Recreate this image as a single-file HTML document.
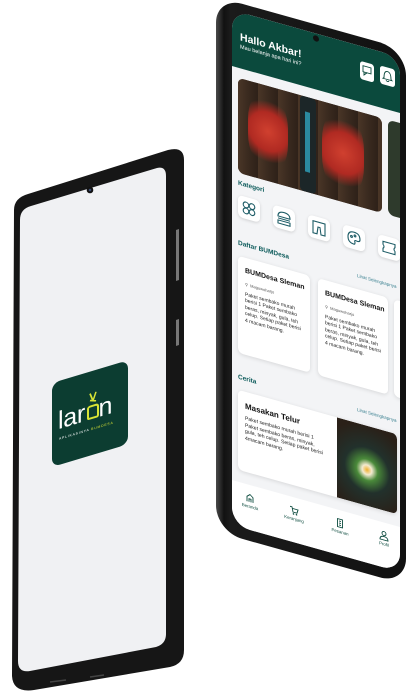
<!DOCTYPE html>
<html><head><meta charset="utf-8"><style>
*{margin:0;padding:0;box-sizing:border-box}
body{width:410px;height:700px;background:#fff;position:relative;overflow:hidden;font-family:"Liberation Sans",sans-serif}
.abs{position:absolute}
#rp{position:absolute;left:232px;top:10px;width:168px;height:515px;transform:skewY(15.64deg);transform-origin:0 0}
.frame{position:absolute;left:-16px;top:-9px;width:190px;height:535px;border-radius:26px;background:linear-gradient(90deg,#4a4a4a 0,#111 8px,#1b1b1b 14px,#111 100%)}
.screen{position:absolute;left:0;top:0;width:168px;height:515px;border-radius:18px;background:#f3f4f6;overflow:hidden}
.hdr{position:absolute;left:0;top:0;width:168px;height:56px;background:#0b4a3d}
.cat{position:absolute;top:183px;width:22px;height:22px;background:#fff;border-radius:5px;box-shadow:0 1px 3px rgba(0,0,0,.15)}
.cat svg{position:absolute;left:3px;top:3px}
.lbl{position:absolute;font-size:6.5px;font-weight:bold;color:#0b5a5a}
.lihat{position:absolute;font-size:4.5px;color:#3a8090}
.card{position:absolute;background:#fff;border-radius:5px;box-shadow:0 1px 4px rgba(0,0,0,.12)}
.card h4{position:absolute;left:7px;top:10px;font-size:7px;color:#111;white-space:nowrap}
.card .loc{position:absolute;left:7px;top:24px;font-size:4px;color:#555;white-space:nowrap}
.card p{position:absolute;left:7px;top:34px;width:57px;font-size:5px;line-height:6.4px;color:#222}
.nav{position:absolute;left:0;top:470px;width:168px;height:45px;background:#fff}
.ni{position:absolute;top:8px;text-align:center;font-size:4.3px;color:#0b4a3d;width:24px}
</style></head><body>

<svg class="abs" style="left:0;top:0" width="200" height="700">
<path d="M14,210 Q14,198 28,194 L168,150 Q184,146 184,160 L184,650 Q184,664 170,667 L34,690 Q13,693 12,676 Z" fill="#161616"/>
<path d="M176,230 L179,229 L179,280 L176,281Z" fill="#777"/>
<path d="M176,320 L179,319 L179,345 L176,346Z" fill="#777"/>
<path d="M20,220 Q20,209 31,206 L157,168 Q166,166 166,176 L166,634 Q166,644 156,647 L30,671 Q18,673 18,661 Z" fill="#f0f1f3"/>
<circle cx="90" cy="190" r="3.3" fill="#111"/><circle cx="90" cy="190" r="1.3" fill="#3a4a70"/>
<path d="M50,682 L66,680" stroke="#444" stroke-width="1.5"/><path d="M90,677 L104,675" stroke="#444" stroke-width="1.5"/>
</svg>

<div class="abs" style="left:52px;top:383px;width:76px;height:84px;transform:skewY(-16.7deg);transform-origin:0 0;background:#0c3d31;border-radius:8px">
 <div class="abs" style="left:6px;top:26px;font-size:25px;color:#fff;letter-spacing:-0.3px">lar<span style="color:#0c3d31">o</span>n</div>
 <div class="abs" style="left:35px;top:34px;width:12px;height:14px;border:2.2px solid #d8e435;border-radius:3px 3px 2px 2px"></div>
 <svg class="abs" style="left:35px;top:21px" width="12" height="13"><path d="M3,1 L6,9 M9,1 L6,9 M3,8 L9,10" stroke="#d8e435" stroke-width="1.6" fill="none"/></svg>
 <div class="abs" style="left:7px;top:56px;font-size:3.4px;color:#fff;letter-spacing:0.8px;white-space:nowrap">APLIKASINYA <span style="color:#d8e435">BUMDESA</span></div>
</div>

<div id="rp">
 <div class="frame"></div>
 <div class="screen">
  <div class="hdr">
   <div class="abs" style="left:8px;top:19px;font-size:10.5px;font-weight:bold;color:#fff">Hallo Akbar!</div>
   <div class="abs" style="left:8px;top:32px;font-size:5.5px;color:#fff">Mau belanja apa hari ini?</div>
   <div class="abs" style="left:128px;top:15px;width:14px;height:18px;background:#fff;border-radius:3px"><svg width="14" height="18"><rect x="3" y="4" width="8" height="6" fill="none" stroke="#0b4a3d" stroke-width=".9"/><path d="M4,10 L4,13 L7,10" fill="none" stroke="#0b4a3d" stroke-width=".9"/></svg></div>
   <div class="abs" style="left:148px;top:14px;width:15px;height:18px;background:#fff;border-radius:3px"><svg width="15" height="18"><path d="M4,11 Q4,4 7.5,4 Q11,4 11,11 L12,12 L3,12 Z M6,13 Q7.5,15 9,13" fill="none" stroke="#0b4a3d" stroke-width=".9"/></svg></div>
  </div>
  <div class="abs" style="left:81px;top:2px;width:6px;height:6px;border-radius:50%;background:#111"></div>
  <div class="abs" style="left:6px;top:66px;width:144px;height:95px;border-radius:6px;overflow:hidden;background:#3b2c22">
   <div class="abs" style="left:0;top:0;width:144px;height:95px;background:repeating-linear-gradient(90deg,#4a3627 0,#3a2a1f 10px,#2e2119 20px)"></div>
   <div class="abs" style="left:10px;top:8px;width:40px;height:75px;border-radius:40%;background:radial-gradient(circle,#d0402f 0,#b02a22 45%,rgba(0,0,0,0) 72%)"></div>
   <div class="abs" style="left:84px;top:6px;width:42px;height:80px;border-radius:40%;background:radial-gradient(circle,#d0402f 0,#b02a22 45%,rgba(0,0,0,0) 72%)"></div>
   <div class="abs" style="left:62px;top:0;width:16px;height:95px;background:#1c2628;border-radius:4px"></div>
   <div class="abs" style="left:67px;top:15px;width:5px;height:60px;background:#2b8aa0"></div>
  </div>
  <div class="abs" style="left:156px;top:66px;width:20px;height:95px;border-radius:6px;background:#2e3a2c"></div>
  <div class="lbl" style="left:6px;top:168px">Kategori</div>
  <div class="cat" style="left:6px"><svg width="16" height="16"><g fill="none" stroke="#1d5c66" stroke-width="1.1"><circle cx="5" cy="5" r="2.8"/><circle cx="11" cy="5" r="2.8"/><circle cx="5" cy="11" r="2.8"/><circle cx="11" cy="11" r="2.8"/></g></svg></div>
  <div class="cat" style="left:41px"><svg width="16" height="16"><g fill="none" stroke="#1d5c66" stroke-width="1.1"><path d="M2,7 Q2,2 8,2 Q14,2 14,7 Z"/><path d="M2,9 L14,9 M2,11 L14,11 L14,14 L2,14Z"/></g></svg></div>
  <div class="cat" style="left:76px"><svg width="16" height="16"><g fill="none" stroke="#1d5c66" stroke-width="1.1"><path d="M2,2 L14,2 L14,14 L10,14 L9,7 L7,7 L6,14 L2,14 Z"/></g></svg></div>
  <div class="cat" style="left:111px"><svg width="16" height="16"><g fill="none" stroke="#1d5c66" stroke-width="1.1"><path d="M8,2 Q14,2 14,8 Q14,11 10,10 Q8,10 9,12 Q9,14 8,14 Q2,14 2,8 Q2,2 8,2Z"/><circle cx="5.5" cy="7" r=".9"/><circle cx="9" cy="5.5" r=".9"/></g></svg></div>
  <div class="cat" style="left:146px"><svg width="16" height="16"><g fill="none" stroke="#1d5c66" stroke-width="1.1"><path d="M2,3 L14,3 L14,6 Q12,8 14,10 L14,13 L2,13 L2,10 Q4,8 2,6 Z"/></g></svg></div>
  <div class="lbl" style="left:6px;top:228px">Daftar BUMDesa</div>
  <div class="lihat" style="left:125px;top:228px">Lihat Selengkapnya</div>
  <div class="card" style="left:6px;top:244px;width:72px;height:97px"><h4>BUMDesa Sleman</h4><div class="loc">&#9906; &nbsp;Maguwoharjo</div><p>Paket sembako murah berisi 1 Paket sembako beras, minyak, gula, teh celup. Setiap paket berisi 4 macam barang.</p></div>
  <div class="card" style="left:86px;top:244px;width:70px;height:97px"><h4>BUMDesa Sleman</h4><div class="loc">&#9906; &nbsp;Maguwoharjo</div><p>Paket sembako murah berisi 1 Paket sembako beras, minyak, gula, teh celup. Setiap paket berisi 4 macam barang.</p></div>
  <div class="card" style="left:162px;top:244px;width:30px;height:97px"></div>
  <div class="lbl" style="left:6px;top:362px">Cerita</div>
  <div class="lihat" style="left:125px;top:362px">Lihat Selengkapnya</div>
  <div class="card" style="left:6px;top:378px;width:159px;height:80px;overflow:hidden">
   <div class="abs" style="left:7px;top:10px;font-size:8px;font-weight:bold;color:#111">Masakan Telur</div>
   <div class="abs" style="left:7px;top:24px;width:80px;font-size:5.1px;line-height:6.6px;color:#222">Paket sembako murah berisi 1 Paket sembako beras, minyak, gula, teh celup. Setiap paket berisi 4macam barang.</div>
   <div class="abs" style="left:99px;top:0;width:60px;height:80px;background:radial-gradient(circle at 50% 55%,#f0b030 0,#f4ead0 9%,#4a8a3a 20%,#22312c 42%,#2a2018 85%)"></div>
  </div>
  <div class="nav">
   <div class="ni" style="left:6px"><svg width="10" height="10"><path d="M2,9 L2,4 L5,1.5 L8,4 L8,9 M4,9 L4,6 L6,6 L6,9" fill="none" stroke="#0b4a3d" stroke-width=".9"/></svg><br>Beranda</div>
   <div class="ni" style="left:50px"><svg width="10" height="10"><path d="M1,2 L3,2 L4,7 L8,7 L9,3.5 L3.5,3.5" fill="none" stroke="#0b4a3d" stroke-width=".9"/><circle cx="4.5" cy="8.7" r=".8" fill="#0b4a3d"/><circle cx="7.5" cy="8.7" r=".8" fill="#0b4a3d"/></svg><br>Keranjang</div>
   <div class="ni" style="left:96px"><svg width="10" height="10"><path d="M2.5,1 L7.5,1 L7.5,9 L2.5,9 Z M4,3 L6,3 M4,5 L6,5 M4,7 L6,7" fill="none" stroke="#0b4a3d" stroke-width=".9"/></svg><br>Pesanan</div>
   <div class="ni" style="left:140px"><svg width="10" height="10"><circle cx="5" cy="3" r="2" fill="none" stroke="#0b4a3d" stroke-width=".9"/><path d="M1,9.5 Q1,6 5,6 Q9,6 9,9.5 Z" fill="none" stroke="#0b4a3d" stroke-width=".9"/></svg><br>Profil</div>
  </div>
 </div>
</div>
</body></html>
